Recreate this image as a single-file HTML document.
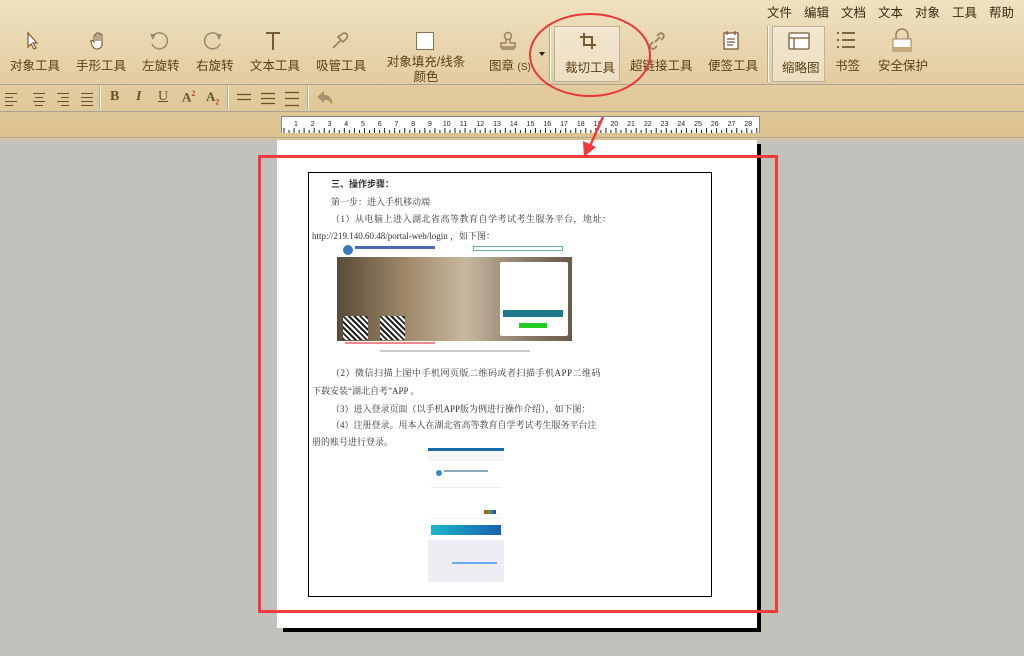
<!DOCTYPE html>
<html><head><meta charset="utf-8"><style>
*{margin:0;padding:0;box-sizing:border-box}
body{width:1024px;height:656px;overflow:hidden;position:relative;background:#c2c1bc;font-family:"Liberation Sans","Noto Sans CJK SC",sans-serif;}
.a{position:absolute}
#tb{left:0;top:0;width:1024px;height:140px;background:linear-gradient(#efe1c0,#e3cc9f 60%,#dcc28f);}
.menu{top:2px;font-size:12.5px;color:#3a2a10}
.lbl{font-size:12.5px;color:#5a3e18;text-align:center;white-space:nowrap}
.hl{border:1px solid #bdb3a0;background:rgba(255,255,255,.35)}
.vs{width:2px;background:#fff;border-left:1px solid #b8a88a}
.hline{left:0;width:1024px;height:1px;background:#a8a298}
.t{font-size:9px;color:#333;white-space:nowrap;font-family:"Liberation Serif","Noto Serif CJK SC",serif}
svg{position:absolute;overflow:visible}
</style></head><body>
<div id="tb" class="a"></div>
<div class="a menu" style="left:767px">文件</div>
<div class="a menu" style="left:804px">编辑</div>
<div class="a menu" style="left:841px">文档</div>
<div class="a menu" style="left:878px">文本</div>
<div class="a menu" style="left:915px">对象</div>
<div class="a menu" style="left:952px">工具</div>
<div class="a menu" style="left:989px">帮助</div>

<svg style="left:26px;top:32px" width="14" height="18"><path d="M2 1 L2 15 L5 12 L8 17 L10 16 L7 11 L11 11 Z" fill="#fff" stroke="#7a5a30" stroke-width="1.2"/></svg>
<svg style="left:90px;top:31px" width="18" height="20"><path d="M4 11 V5 a1 1 0 0 1 2 0 V10 V3 a1 1 0 0 1 2 0 V10 V3 a1 1 0 0 1 2 0 V10 V4 a1 1 0 0 1 2 0 V13 c0 3-2 5-5 5 c-3 0-4-2-5-4 l-1-3 a1 1 0 0 1 2-1z" fill="#fff" stroke="#7a5a30" stroke-width="1.1"/></svg>
<svg style="left:149px;top:31px" width="20" height="20"><path d="M4 5 A8 8 0 1 1 3 13" fill="none" stroke="#9a8a70" stroke-width="1.5"/><path d="M1 3 L7 3 L4 9Z" fill="#9a8a70"/></svg>
<svg style="left:203px;top:31px" width="20" height="20"><path d="M16 5 A8 8 0 1 0 17 13" fill="none" stroke="#9a8a70" stroke-width="1.5"/><path d="M19 3 L13 3 L16 9Z" fill="#9a8a70"/></svg>
<svg style="left:265px;top:31px" width="16" height="20"><path d="M1 2 H15 M8 2 V19" stroke="#7a5a30" stroke-width="2"/></svg>
<svg style="left:330px;top:31px" width="20" height="20"><path d="M3 17 L11 9 M8 6 l5 5 M12 3 a2.5 2.5 0 0 1 4.5 4.5 l-3.5 3.5 -5 -5z" fill="none" stroke="#9a8060" stroke-width="1.6"/></svg>
<div class="a" style="left:416px;top:32px;width:18px;height:18px;background:#fff;border:1px solid #8a7050"></div>
<svg style="left:498px;top:31px" width="20" height="20"><circle cx="10" cy="5" r="3.5" fill="none" stroke="#9a8060" stroke-width="1.5"/><path d="M8 8 V12 H3 V16 H17 V12 H12 V8 M3 18 H17" fill="none" stroke="#9a8060" stroke-width="1.5"/></svg>
<div class="a" style="left:539px;top:52px;width:0;height:0;border-left:3px solid transparent;border-right:3px solid transparent;border-top:4px solid #222"></div>
<div class="a vs" style="left:549px;top:26px;height:56px"></div>
<div class="a hl" style="left:554px;top:26px;width:66px;height:56px"></div>
<svg style="left:579px;top:32px" width="18" height="18"><path d="M5 1 V13 H17 M1 5 H13 V17" fill="none" stroke="#7a5a30" stroke-width="2"/></svg>
<svg style="left:648px;top:31px" width="20" height="20"><path d="M7 11 L12 6 M5 11 l-2 2 a2.5 2.5 0 0 0 4 4 l2-2 M13 9 l2-2 a2.5 2.5 0 0 0-4-4 l-2 2" fill="none" stroke="#9a8060" stroke-width="1.8"/></svg>
<svg style="left:722px;top:30px" width="18" height="20"><rect x="2" y="3" width="14" height="16" fill="#fff" stroke="#7a5a30" stroke-width="1.3"/><path d="M5 1 V5 M13 1 V5 M5 9 H13 M5 12 H13 M5 15 H11" stroke="#7a5a30" stroke-width="1.2"/></svg>
<div class="a vs" style="left:767px;top:26px;height:56px"></div>
<div class="a hl" style="left:772px;top:26px;width:53px;height:56px"></div>
<svg style="left:788px;top:32px" width="22" height="18"><rect x="1" y="1" width="20" height="16" rx="1" fill="#fff" stroke="#7a5a30" stroke-width="1.3"/><path d="M1 6 H21 M6 6 V17" stroke="#7a5a30" stroke-width="1.3"/></svg>
<svg style="left:836px;top:31px" width="20" height="18"><path d="M1 2 H3 M6 2 H19 M1 9 H3 M6 9 H19 M1 16 H3 M6 16 H19" stroke="#5a4020" stroke-width="1.5"/></svg>
<svg style="left:891px;top:28px" width="22" height="24"><path d="M5 11 V7 a6 6 0 0 1 12 0 V11" fill="none" stroke="#9a8060" stroke-width="1.5"/><rect x="2" y="11" width="18" height="12" fill="#fff" stroke="#9a8060"/><rect x="2" y="19" width="18" height="4" fill="#c8a878"/></svg>

<div class="a lbl" style="left:10px;top:55px">对象工具</div>
<div class="a lbl" style="left:76px;top:55px">手形工具</div>
<div class="a lbl" style="left:142px;top:55px">左旋转</div>
<div class="a lbl" style="left:196px;top:55px">右旋转</div>
<div class="a lbl" style="left:250px;top:55px">文本工具</div>
<div class="a lbl" style="left:316px;top:55px">吸管工具</div>
<div class="a lbl" style="left:382px;top:55px;width:88px;line-height:15px;white-space:normal">对象填充/线条颜色</div>
<div class="a lbl" style="left:489px;top:55px">图章 <span style="font-size:10px">(S)</span></div>
<div class="a lbl" style="left:565px;top:57px">裁切工具</div>
<div class="a lbl" style="left:630px;top:55px">超链接工具</div>
<div class="a lbl" style="left:708px;top:55px">便签工具</div>
<div class="a lbl" style="left:782px;top:57px">缩略图</div>
<div class="a lbl" style="left:835px;top:55px">书签</div>
<div class="a lbl" style="left:878px;top:55px">安全保护</div>

<div class="a hline" style="top:84px"></div>
<svg style="left:4px;top:92px" width="300" height="14" stroke="#6a5030" stroke-width="1">
<path d="M1 1.5H13M1 5.5H9M1 9.5H13M1 13.5H9"/>
<path d="M29 1.5H41M31 5.5H39M29 9.5H41M31 13.5H39"/>
<path d="M53 1.5H65M57 5.5H65M53 9.5H65M57 13.5H65"/>
<path d="M77 1.5H89M77 5.5H89M77 9.5H89M77 13.5H89"/>
</svg>
<div class="a vs" style="left:99px;top:86px;height:24px"></div>
<div class="a" style="left:110px;top:89px;font:bold 14px 'Liberation Serif',serif;color:#6a5030">B</div>
<div class="a" style="left:136px;top:89px;font:italic bold 14px 'Liberation Serif',serif;color:#6a5030">I</div>
<div class="a" style="left:158px;top:89px;font:14px 'Liberation Serif',serif;color:#6a5030;text-decoration:underline">U</div>
<div class="a" style="left:182px;top:89px;font:bold 13px 'Liberation Serif',serif;color:#6a5030">A<sup style="font-size:8px;color:#b04030">2</sup></div>
<div class="a" style="left:206px;top:89px;font:bold 13px 'Liberation Serif',serif;color:#6a5030">A<sub style="font-size:8px;color:#b04030">2</sub></div>
<div class="a vs" style="left:227px;top:86px;height:24px"></div>
<svg style="left:236px;top:91px" width="70" height="16" stroke="#6a5030" stroke-width="1.2"><path d="M1 3.5H15M1 8.5H15"/><path d="M25 2.5H39M25 7.5H39M25 12.5H39"/><path d="M49 1.5H63M49 7.5H63M49 14.5H63"/></svg>
<div class="a vs" style="left:307px;top:86px;height:24px"></div>
<svg style="left:316px;top:90px" width="18" height="16"><path d="M1 7 L8 1 V5 C14 5 17 9 16 15 C14 11 12 10 8 10 V13 Z" fill="#a89070"/></svg>
<div class="a hline" style="top:111px"></div>
<div class="a" style="left:281px;top:116px;width:479px;height:17px;background:#fff;border:1px solid #888;border-bottom:none"></div>
<svg style="left:281px;top:116px" width="479" height="17" id="rul"></svg>
<div class="a hline" style="top:137px;background:#b0aaa0"></div>

<div class="a" style="left:283px;top:144px;width:478px;height:488px;background:#000"></div>
<div class="a" style="left:277px;top:140px;width:480px;height:488px;background:#fff"></div>
<div class="a" style="left:308px;top:172px;width:404px;height:425px;border:1px solid #000"></div>
<div class="a t" style="left:331px;top:177px;font-weight:bold;font-family:'Liberation Sans','Noto Sans CJK SC',sans-serif">三、操作步骤：</div>
<div class="a t" style="left:331px;top:195px">第一步：进入手机移动端</div>
<div class="a t" style="left:331px;top:212px;letter-spacing:.5px">（1）从电脑上进入湖北省高等教育自学考试考生服务平台，地址：</div>
<div class="a t" style="left:312px;top:229px">http://219.140.60.48/portal-web/login ，如下图：</div>
<div class="a" style="left:337px;top:243px;width:235px;height:115px;background:#fff"></div>
<div class="a" style="left:343px;top:245px;width:10px;height:10px;border-radius:50%;background:#3a7ac0"></div>
<div class="a" style="left:355px;top:246px;width:80px;height:3px;background:#4a6ab0"></div>
<div class="a" style="left:473px;top:246px;width:90px;height:5px;border:1px solid #6aa"></div>
<div class="a" style="left:337px;top:257px;width:235px;height:84px;background:linear-gradient(90deg,#5a4a3a,#a08a6a 30%,#c8b8a0 55%,#8a7a68 80%,#6a5a4a)"></div>
<div class="a" style="left:500px;top:262px;width:68px;height:74px;background:#fff;border-radius:2px"></div>
<div class="a" style="left:503px;top:310px;width:60px;height:7px;background:#1e7a8a"></div>
<div class="a" style="left:519px;top:323px;width:28px;height:5px;background:#2c2"></div>
<div class="a" style="left:343px;top:316px;width:25px;height:24px;background:repeating-linear-gradient(45deg,#222 0 2px,#fff 2px 4px)"></div>
<div class="a" style="left:380px;top:316px;width:25px;height:24px;background:repeating-linear-gradient(45deg,#222 0 2px,#fff 2px 4px)"></div>
<div class="a" style="left:345px;top:342px;width:90px;height:2px;background:#e88"></div>
<div class="a" style="left:380px;top:350px;width:150px;height:2px;background:#ccc"></div>
<div class="a t" style="left:331px;top:366px;letter-spacing:.5px">（2）微信扫描上图中手机网页版二维码或者扫描手机APP二维码</div>
<div class="a t" style="left:312px;top:384px">下载安装“湖北自考”APP 。</div>
<div class="a t" style="left:331px;top:402px">（3）进入登录页面（以手机APP版为例进行操作介绍），如下图：</div>
<div class="a t" style="left:331px;top:418px">（4）注册登录。用本人在湖北省高等教育自学考试考生服务平台注</div>
<div class="a t" style="left:312px;top:435px">册的账号进行登录。</div>
<div class="a" style="left:428px;top:448px;width:76px;height:134px;background:#fff"></div>
<div class="a" style="left:428px;top:448px;width:76px;height:3px;background:#1a6ab0"></div>
<div class="a" style="left:428px;top:451px;width:76px;height:10px;background:#f4f4f6"></div>
<div class="a" style="left:436px;top:470px;width:6px;height:6px;border-radius:50%;background:#3a8ad0"></div>
<div class="a" style="left:444px;top:470px;width:44px;height:2px;background:#8ab"></div>
<div class="a" style="left:431px;top:487px;width:70px;height:32px;border-top:1px solid #eee;border-bottom:1px solid #eee"></div>
<div class="a" style="left:484px;top:510px;width:12px;height:4px;background:linear-gradient(90deg,#e33,#3a3,#33e)"></div>
<div class="a" style="left:431px;top:525px;width:70px;height:10px;background:linear-gradient(90deg,#1ab8c8,#1a60b0)"></div>
<div class="a" style="left:428px;top:540px;width:76px;height:42px;background:#eeedf3"></div>
<div class="a" style="left:452px;top:562px;width:45px;height:2px;background:#6af"></div>

<div class="a" style="left:258px;top:155px;width:520px;height:458px;border:3px solid #f43a3a"></div>
<div class="a" style="left:529px;top:13px;width:122px;height:84px;border:2.5px solid #e8383a;border-radius:50%"></div>
<svg style="left:0;top:0" width="1024" height="656"><path d="M603 117 L590 146" stroke="#f43a3a" stroke-width="2.5"/><path d="M584 157 L583 141 L596 147Z" fill="#f43a3a"/></svg>
<script>
var s='',r=document.getElementById('rul');
for(var i=0;i<=94;i++){var x=3+i*5.03;var h=i%2?3:5;s+='<line x1="'+x+'" x2="'+x+'" y1="'+(17-h)+'" y2="17" stroke="#222" stroke-width="1"/>';}
for(var n=1;n<=28;n++){s+='<text x="'+(15+(n-1)*16.75)+'" y="10" font-size="7" font-family="Liberation Sans" text-anchor="middle" fill="#222">'+n+'</text>';}
r.innerHTML=s;
</script>
</body></html>
